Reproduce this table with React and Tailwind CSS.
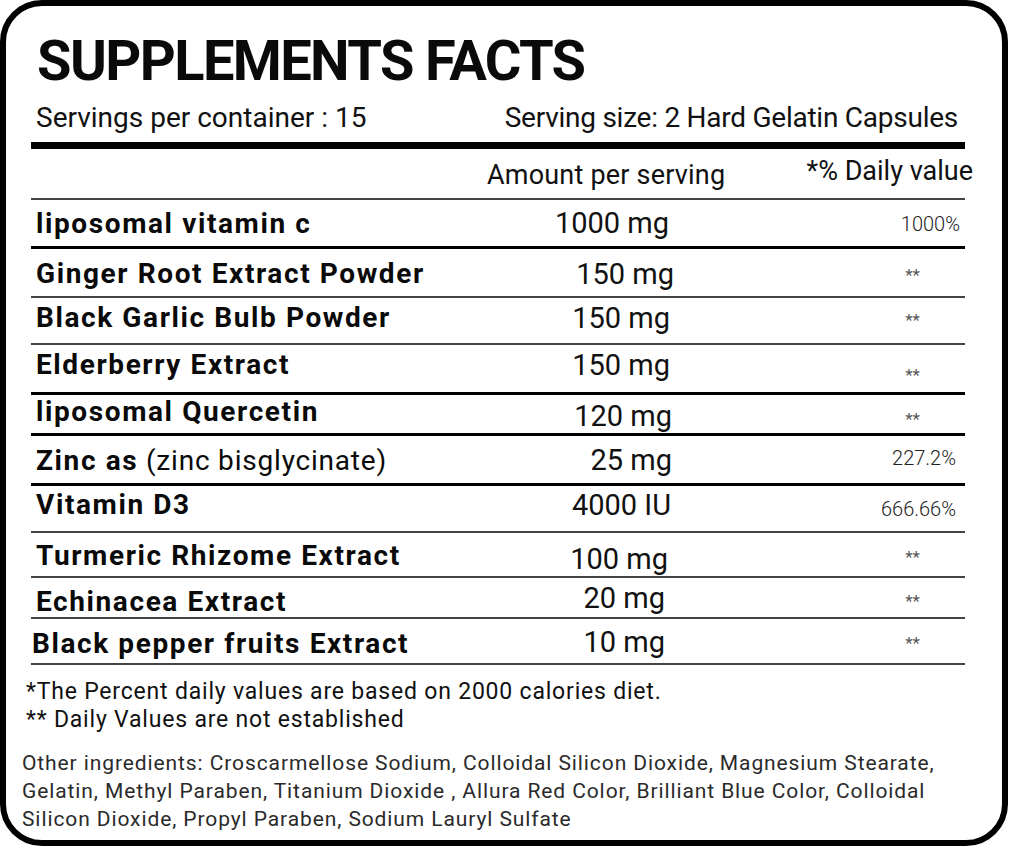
import React from "react";

// supplement facts label
const rows = [
  { name: "liposomal vitamin c", amount: "1000 mg", dv: "1000%", body: "h-[46px]", nameMt: "mt-[10px]", amtMt: "mt-[9px]", amtPr: "pr-[6px]", dvMt: "mt-[14px]", dvPr: "pr-[5px]", line: "h-[3px] bg-black" },
  { name: "Ginger Root Extract Powder", amount: "150 mg", dv: "**", body: "h-[47px]", nameMt: "mt-[11px]", amtMt: "mt-[11px]", amtPr: "pr-[1px]", dvMt: "mt-[18px]", line: "h-[2px] bg-[#444]" },
  { name: "Black Garlic Bulb Powder", amount: "150 mg", dv: "**", body: "h-[45px]", nameMt: "mt-[6px]", amtMt: "mt-[6px]", amtPr: "pr-[5px]", dvMt: "mt-[14px]", line: "h-[2px] bg-[#444]" },
  { name: "Elderberry Extract", amount: "150 mg", dv: "**", body: "h-[47px]", nameMt: "mt-[6px]", amtMt: "mt-[6px]", amtPr: "pr-[5px]", dvMt: "mt-[22px]", line: "h-[3px] bg-black" },
  { name: "liposomal Quercetin", amount: "120 mg", dv: "**", body: "h-[38px]", nameMt: "mt-[3px]", amtMt: "mt-[7px]", amtPr: "pr-[3px]", dvMt: "mt-[16px]", line: "h-[3px] bg-black" },
  { name: "Zinc as", extra: " (zinc bisglycinate)", amount: "25 mg", dv: "227.2%", body: "h-[47px]", nameMt: "mt-[11px]", amtMt: "mt-[10px]", amtPr: "pr-[3px]", dvMt: "mt-[12px]", dvPr: "pr-[9px]", line: "h-[3px] bg-black" },
  { name: "Vitamin D3", amount: "4000 IU", dv: "666.66%", body: "h-[45px]", nameMt: "mt-[5px]", amtMt: "mt-[5px]", amtPr: "pr-[4px]", dvMt: "mt-[13px]", dvPr: "pr-[9px]", line: "h-[2px] bg-[#444]" },
  { name: "Turmeric Rhizome Extract", amount: "100 mg", dv: "**", body: "h-[43px]", nameMt: "mt-[9px]", amtMt: "mt-[12px]", amtPr: "pr-[7px]", dvMt: "mt-[16px]", line: "h-[2px] bg-[#444]" },
  { name: "Echinacea Extract", amount: "20 mg", dv: "**", body: "h-[39px]", nameMt: "mt-[10px]", amtMt: "mt-[6px]", amtPr: "pr-[10px]", dvMt: "mt-[15px]", line: "h-[2px] bg-[#444]" },
  { name: "Black pepper fruits Extract", amount: "10 mg", dv: "**", body: "h-[44px]", nameMt: "mt-[11px]", namePl: "pl-[1px]", amtMt: "mt-[9px]", amtPr: "pr-[10px]", dvMt: "mt-[16px]", line: "h-[2px] bg-[#444]" },
];

const FactRow = ({ row }) => {
  const isStars = row.dv === "**";
  return (
    <>
      <div className={`flex items-start ${row.body}`}>
        <div className={`w-[420px] whitespace-nowrap text-[28px] leading-[28px] font-bold tracking-[1.6px] text-[#0a0a0a] ${row.nameMt} ${row.namePl || "pl-[5px]"}`}>
          {row.name}
          {row.extra && <span className="font-normal tracking-[0.8px]">{row.extra}</span>}
        </div>
        <div className={`w-[224px] text-right whitespace-nowrap text-[29px] leading-[29px] text-[#111] ${row.amtMt} ${row.amtPr}`}>
          {row.amount}
        </div>
        <div className="flex-1" />
        {isStars ? (
          <div className={`w-[105px] text-center text-[17px] leading-[17px] text-[#555] ${row.dvMt}`}>**</div>
        ) : (
          <div className={`w-[105px] text-right text-[20px] leading-[20px] font-light text-[#222] ${row.dvMt} ${row.dvPr}`}>
            {row.dv}
          </div>
        )}
      </div>
      <div className={`w-full ${row.line}`} />
    </>
  );
};

export default function App() {
  return (
    <div className="w-[1009px] h-[868px] bg-white font-['Roboto',_'Liberation_Sans',_sans-serif]">
      <div className="w-[1008px] h-[846px] border-[6px] border-black rounded-[42px] pl-[25px] pr-[37px] pt-[27px] box-border">
        {/* Title */}
        <h1 className="pl-[6px] text-[56px] leading-[56px] font-bold tracking-[-1.6px] text-[#0a0a0a] whitespace-nowrap">
          SUPPLEMENTS FACTS
        </h1>

        {/* Servings */}
        <div className="mt-[15px] flex justify-between pl-[5px] pr-[7px] text-[28px] leading-[28px] text-[#111] whitespace-nowrap">
          <span>Servings per container : 15</span>
          <span className="tracking-[-0.25px]">Serving size: 2 Hard Gelatin Capsules</span>
        </div>

        <div className="mt-[10px] h-[7px] bg-black" />

        {/* Column headings */}
        <div className="flex items-start h-[49px] text-[27px] leading-[27px] text-[#111] whitespace-nowrap">
          <span className="ml-[456px] mt-[13px] tracking-[0.2px]">Amount per serving</span>
          <span className="ml-auto mt-[9px] -mr-[8px]">*% Daily value</span>
        </div>
        <div className="h-[2px] bg-[#444]" />

        {rows.map((row) => (
          <FactRow key={row.name} row={row} />
        ))}

        {/* Footnotes */}
        <div className="mt-[13px] -ml-[5px] text-[23px] leading-[28px] tracking-[0.8px] text-[#111] whitespace-nowrap">
          <p>*The Percent daily values are based on 2000 calories diet.</p>
          <p>** Daily Values are not established</p>
        </div>

        <p className="mt-[15px] -ml-[9px] -mr-[30px] text-[21px] leading-[28px] tracking-[0.9px] text-[#2a2a2a] whitespace-nowrap">
          Other ingredients: Croscarmellose Sodium, Colloidal Silicon Dioxide, Magnesium Stearate,
          <br />
          Gelatin, Methyl Paraben, Titanium Dioxide , Allura Red Color, Brilliant Blue Color, Colloidal
          <br />
          Silicon Dioxide, Propyl Paraben, Sodium Lauryl Sulfate
        </p>
      </div>
    </div>
  );
}
